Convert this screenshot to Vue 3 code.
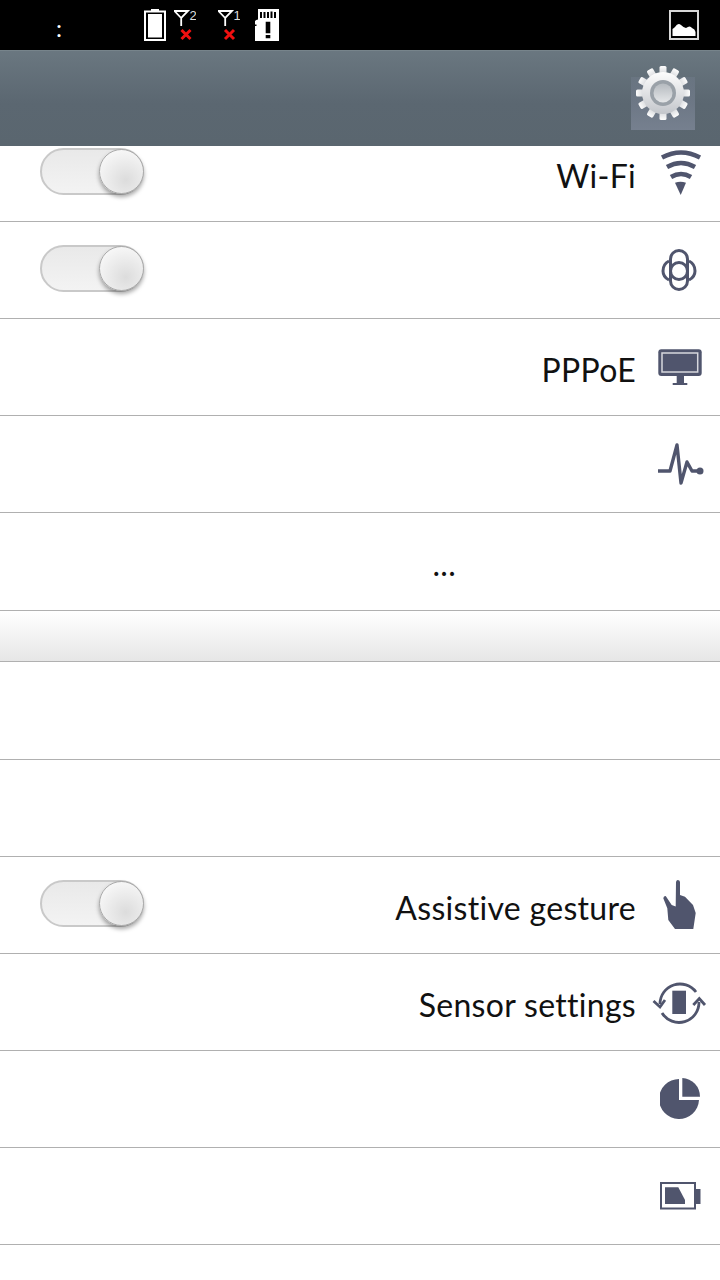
<script setup>
// 12 teeth round the gear
const teeth = Array.from({ length: 12 }, (_, i) => i * 30)
</script>

<template>
  <main class="page">
    <div class="statusbar">
      <span class="clock">:</span>
      <svg class="st-battery" width="22" height="32" viewBox="0 0 22 32">
        <rect x="7" y="0" width="8" height="2" fill="#fff" />
        <rect x="1" y="2.500" width="20" height="28.500" fill="none" stroke="#fff" stroke-width="2" />
        <rect x="4" y="5" width="14" height="23.500" fill="#fff" />
      </svg>
      <svg class="st-signal" width="22" height="32" viewBox="0 0 22 32">
        <path d="M0.500 2H14L7.200 9ZM7.200 9V17" fill="none" stroke="#fff" stroke-width="1.800" />
        <text x="15.500" y="10.500" class="sim">2</text>
        <path d="M7.500 21L16.500 30M16.500 21L7.500 30" stroke="#f01010" stroke-width="3" />
      </svg>
      <svg class="st-signal2" width="22" height="32" viewBox="0 0 22 32">
        <path d="M0.500 2H14L7.200 9ZM7.200 9V17" fill="none" stroke="#fff" stroke-width="1.800" />
        <text x="15.500" y="10.500" class="sim">1</text>
        <path d="M7 21L16 30M16 21L7 30" stroke="#f01010" stroke-width="3" />
      </svg>
      <svg class="st-sd" width="24" height="32" viewBox="0 0 24 32">
        <path fill="#fff" d="M3 0H24V32H0V17H1.500V15.500H0V12Q1 10.500 3 10.500Z" />
        <path fill="#000" d="M5 3H7V9H5ZM8.500 3H10.500V9H8.500ZM12 3H14V9H12ZM15.500 2.500H17.500V9H15.500ZM19 3H21V9H19Z" />
        <path fill="#000" d="M10.700 12.700H15.300V24.300H10.700ZM10.700 26H15.300V29.300H10.700Z" />
      </svg>
      <svg class="st-picture" width="30" height="30" viewBox="0 0 30 30">
        <rect x="1" y="1" width="28" height="28" fill="none" stroke="#d8d8d8" stroke-width="2" />
        <path fill="#fff" d="M3.500 26V19Q5 18 6 17Q9 12 12 15Q15 18 17 18Q21 15 23 18Q26 19 26.500 22V26Z" />
      </svg>
    </div>

    <header class="topbar">
      <div class="gear-box">
        <svg class="gear" width="56" height="56" viewBox="0 0 56 56">
          <defs>
            <linearGradient id="gearFill" x1="0" y1="0" x2="0" y2="1">
              <stop offset="0" stop-color="#fdfdfd" />
              <stop offset="1" stop-color="#c3c6cb" />
            </linearGradient>
            <linearGradient id="hubFill" x1="0" y1="0" x2="0" y2="1">
              <stop offset="0" stop-color="#b5babf" />
              <stop offset="1" stop-color="#e4e6e8" />
            </linearGradient>
          </defs>
          <g fill="url(#gearFill)">
            <rect
              v-for="deg in teeth"
              :key="deg"
              x="24.500"
              y="1"
              width="7"
              height="12"
              rx="1.500"
              :transform="`rotate(${deg} 28 28)`"
            />
            <circle cx="28" cy="28" r="21" />
          </g>
          <circle cx="28" cy="28" r="13" fill="#9aa1a8" />
          <circle cx="28" cy="28" r="9.500" fill="url(#hubFill)" />
        </svg>
      </div>
    </header>

    <section class="list">
      <div class="row first">
        <div class="toggle"><span class="knob"></span></div>
        <span class="label">Wi-Fi</span>
        <svg class="icon" width="44" height="48" viewBox="0 0 44 48">
          <g fill="none" stroke="#50556d" stroke-width="4.500">
            <path d="M2 8.500Q21 -1.500 40 8.500" />
            <path d="M7 18Q21 10 35 18" />
            <path d="M11 28Q21 22 31 28" />
          </g>
          <path d="M15 33.700Q20.500 32 26 33.700L20.700 46Z" fill="#50556d" />
        </svg>
      </div>

      <div class="row">
        <div class="toggle"><span class="knob"></span></div>
        <svg class="icon" width="44" height="48" viewBox="0 0 44 48">
          <g fill="none" stroke="#50556d" stroke-width="3">
            <rect x="10.500" y="4.500" width="17" height="39" rx="8.500" />
            <circle cx="19" cy="25" r="8.500" />
            <path d="M9 15Q3 18 3 25Q3 31 9 34M29 15Q35 18 35 25Q35 31 29 34" />
          </g>
        </svg>
      </div>

      <div class="row">
        <span class="label">PPPoE</span>
        <svg class="icon" width="46" height="48" viewBox="0 0 46 48">
          <rect x="0.300" y="6.300" width="43.400" height="26.700" rx="3" fill="#50556d" />
          <rect x="4" y="10" width="35.700" height="19" fill="none" stroke="#d6d7dd" stroke-width="1.500" />
          <path d="M18.700 33H26V40H29.300V42H14.700V40H18.700Z" fill="#50556d" />
        </svg>
      </div>

      <div class="row">
        <svg class="icon" width="48" height="48" viewBox="0 0 48 48">
          <path d="M2 31H14L21 5L25 43L31 22L36 31H44" fill="none" stroke="#50556d" stroke-width="3.400" stroke-linejoin="round" />
          <circle cx="44" cy="31" r="3.500" fill="#50556d" />
        </svg>
      </div>

      <div class="row dots"><span class="label">...</span></div>

      <div class="divider"></div>

      <div class="row tall"></div>
      <div class="row"></div>

      <div class="row">
        <div class="toggle"><span class="knob"></span></div>
        <span class="label">Assistive gesture</span>
        <svg class="icon" width="44" height="52" viewBox="0 0 44 52">
          <path fill="#50556d" d="M16 3Q16.500 1 17.700 1Q19.800 1 20 3L20 16L25 17.700L33 26L35.700 34L33.300 50H15L8.300 41L7.300 29.300L3.300 19.300Q3.500 17 5.700 17L11.700 26L15.700 27.500Z" />
        </svg>
      </div>

      <div class="row">
        <span class="label">Sensor settings</span>
        <svg class="icon" width="56" height="48" viewBox="0 0 56 48">
          <rect x="20.300" y="12.700" width="13.700" height="23.300" fill="#50556d" />
          <g fill="none" stroke="#50556d" stroke-width="2.800">
            <path d="M8 26A20 20 0 0 1 44 14" />
            <path d="M47 24A20 20 0 0 1 10 35" />
            <path d="M1.500 23L8 29L13 22" />
            <path d="M41.300 27L47.300 20.500L53 27" />
          </g>
        </svg>
      </div>

      <div class="row">
        <svg class="icon" width="44" height="44" viewBox="0 0 44 44">
          <path fill="#50556d" d="M19 2V23H39A20 20 0 1 1 19 2Z" />
          <path fill="#50556d" d="M22.300 1A18.500 18.500 0 0 1 40 19.700H22.300Z" />
        </svg>
      </div>

      <div class="row">
        <svg class="icon" width="44" height="28" viewBox="0 0 44 28">
          <rect x="1" y="1" width="34" height="25.500" fill="none" stroke="#50556d" stroke-width="2" />
          <path fill="#50556d" d="M5 5.300H18.300L25 18V22H5Z" />
          <rect x="36" y="7" width="4.500" height="15" fill="#50556d" />
        </svg>
      </div>
    </section>
  </main>
</template>

<style scoped>
  .page {
    width: 720px;
    height: 1280px;
    overflow: hidden;
    background: #fff;
    font-family: Lato, "Open Sans", sans-serif;
    color: #111;
  }

  /* Statusrad */
  .statusbar {
    height: 50px;
    background: #000;
    display: flex;
    align-items: flex-start;
  }
  .clock {
    margin-left: 56px;
    width: 88px;
    margin-top: 13px;
    color: #fff;
    font-size: 24px;
    line-height: 30px;
  }
  .statusbar svg {
    margin-top: 9px;
    flex: none;
  }
  .st-signal {
    margin-left: 8px;
  }
  .st-signal2 {
    margin-left: 22px;
  }
  .st-sd {
    margin-left: 15px;
  }
  .st-picture {
    margin-left: auto;
    margin-right: 21px;
    margin-top: 10px !important;
  }
  .sim {
    fill: #ddd;
    font-family: "Liberation Sans", sans-serif;
    font-size: 13px;
  }

  /* Toppen */
  .topbar {
    height: 96px;
    box-sizing: border-box;
    border-top: 1px solid #77848b;
    background: linear-gradient(#6a7780, #5b6771 55%, #5a666f);
    display: flex;
    justify-content: flex-end;
    padding: 26px 25px 0 0;
  }
  .gear-box {
    position: relative;
    width: 64px;
    height: 53px;
    background: linear-gradient(rgba(118, 128, 146, 0.35), #76808f);
  }
  .gear {
    position: absolute;
    left: 4px;
    top: -12px;
  }

  /* Lista */
  .list {
    display: flex;
    flex-direction: column;
  }
  .row {
    position: relative;
    height: 97px;
    box-sizing: border-box;
    border-bottom: 1px solid #b0b0b0;
    display: flex;
    align-items: center;
    justify-content: flex-end;
    padding-right: 84px;
  }
  .row.first {
    height: 76px;
    padding-bottom: 20px;
  }
  .row.first .icon {
    top: 3px;
    transform: none;
  }
  .row.tall {
    height: 98px;
  }
  .row.dots {
    height: 98px;
    padding-right: 264px;
  }
  .label {
    font-size: 32px;
    line-height: 40px;
    letter-spacing: 0.3px;
    padding-top: 5px;
    white-space: nowrap;
  }
  .icon {
    position: absolute;
    right: 16px;
    top: 50%;
    transform: translateY(-50%);
  }
  .icon[width="56"] {
    right: 12px;
  }
  .divider {
    height: 51px;
    box-sizing: border-box;
    border-bottom: 1px solid #b0b0b0;
    background: linear-gradient(#fff, #e6e6e6);
  }

  /* Reglage */
  .toggle {
    position: absolute;
    left: 40px;
    top: 50%;
    margin-top: -25px;
    width: 104px;
    height: 47px;
    box-sizing: border-box;
    border: 2px solid #c9c9c9;
    border-radius: 24px;
    background: linear-gradient(#e9e9e9, #f3f3f3);
  }
  .row.first .toggle {
    top: 2px;
    margin-top: 0;
  }
  .knob {
    position: absolute;
    right: -2px;
    top: -1px;
    width: 45px;
    height: 45px;
    box-sizing: border-box;
    border: 1px solid #aaa;
    border-radius: 50%;
    background: radial-gradient(circle at 60% 70%, #dcdcdc, #f6f6f6 75%);
    box-shadow: 0 3px 4px rgba(0, 0, 0, 0.35);
  }
</style>
